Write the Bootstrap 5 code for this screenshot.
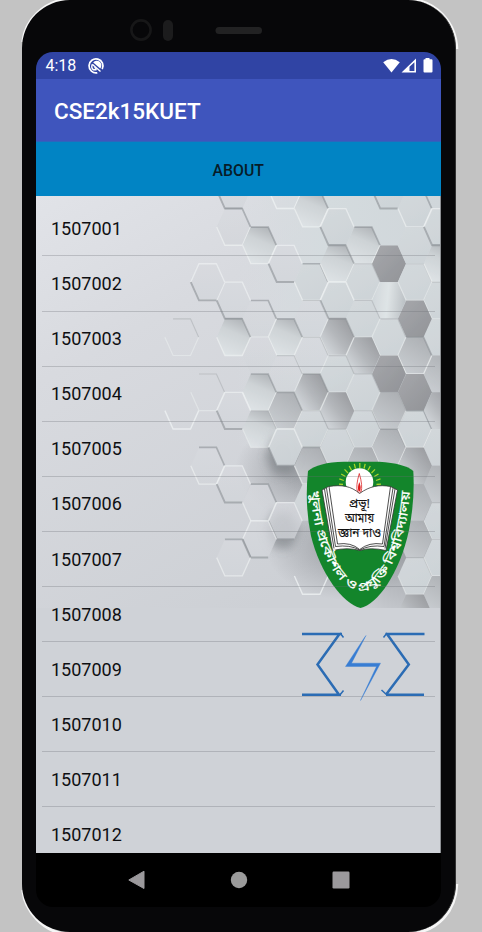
<!DOCTYPE html>
<html lang="en">
<head>
<meta charset="utf-8">
<meta name="viewport" content="width=device-width, initial-scale=1">
<title>CSE2k15KUET</title>
<link href="https://cdn.jsdelivr.net/npm/bootstrap@5.3.0/dist/css/bootstrap.min.css" rel="stylesheet">
<style>
body{background:#c3c3c3;font-family:Roboto,"Noto Sans",sans-serif;width:482px;height:932px}
.stage{width:482px;height:932px}
.rim{left:0;top:0}
.phone{width:434px;height:932px;margin-left:22px;background:#070709;border-radius:48px;border-right:1px solid #333;padding:0 14px}
.bezel{height:52px;margin:0 -14px}
.screen{width:404.5px;height:855px;border-radius:17px;background:#000}
.statusbar{height:27px;background:#3044a4;color:#fff;font-size:16px;padding-left:9.5px;padding-right:8px}
.appbar{height:63px;background:#3f55bd;padding:2px 0 0 18px;color:#fff;font-size:22.5px;font-weight:500;box-shadow:inset 0 -1px 0 #2c66bd}
.about{height:54px;background:#0184c4;color:#071c29;font-size:15.8px;font-weight:500;border:0;border-radius:0;padding:3px 0 0}
.about:hover{background:#0184c4}
.pane{height:657px;background:#cfd2d7;border-right:1px solid #8d9094}
.backdrop{left:0;top:0}
.roster{padding:5.4px 5px 0 6px}
.roster .list-group-item{height:55.1px;background:transparent;border:0;border-bottom:1.5px solid rgba(105,110,116,.3);border-radius:0;padding:0 9px;font-size:18px;color:#0e0f12;display:flex;align-items:center}
.navkeys{height:54px;padding:0 91px 0 92px}
</style>
</head>
<body>
<div class="stage position-relative overflow-hidden">
  <svg class="rim position-absolute" width="482" height="932" fill="none" stroke="#f6f6f6" stroke-width="2.600">
    <path d="M22.5 42C25 20 44 1 68 -1M410 -1C436 1 456 22 457 49M22.5 890C25 912 44 932 66 934M412 934C438 930 456 912 457 884"/>
  </svg>
  <main class="phone position-relative">
    <div class="bezel">
      <svg width="434" height="52">
        <circle cx="119" cy="30" r="9.6" fill="none" stroke="#171718" stroke-width="2.6"/>
        <rect x="141" y="20" width="10" height="21" rx="5" fill="#1c1c1d"/>
        <rect x="193.500" y="27" width="46.500" height="7" rx="3.500" fill="#222223"/>
      </svg>
    </div>
    <div class="screen overflow-hidden d-flex flex-column">
      <div class="statusbar d-flex align-items-center">
        <span>4:18</span>
        <svg class="ms-2" width="24" height="20" viewBox="0 0 24 20">
          <path d="M13.300 16.800A7 7 0 1 1 18.200 13.200" fill="none" stroke="#fff" stroke-width="1.700"/>
          <path d="M9.200 6.400A4.600 4.600 0 0 1 16.300 12.400z" fill="#fff"/>
          <path d="M8.300 8.300L16.500 15.500M8.300 8.300Q6.800 12 9.500 13.800H12.500" fill="none" stroke="#fff" stroke-width="1.400"/>
          <path d="M10.500 11.300l2.200 1.900" stroke="#fff" stroke-width="1.500"/>
        </svg>
        <svg class="ms-auto" width="50" height="18" viewBox="0 0 50 18" fill="#fff">
          <path d="M.2 5.200Q8.500-1.400 16.800 5.200L8.500 15.500z"/>
          <path fill-rule="evenodd" d="M18.500 15.500L33 1.500V15.500zM26.500 9.800V14H31.400V5.200z"/>
          <path d="M42.500 1h4v1.300h2q1 0 1 1V14.500q0 1-1 1h-7q-1 0-1-1V3.300q0-1 1-1h1z"/>
        </svg>
      </div>
      <header class="appbar d-flex align-items-center">CSE2k15KUET</header>
      <button class="about btn w-100" type="button">ABOUT</button>
      <section class="pane position-relative overflow-hidden">
        <svg class="backdrop position-absolute" width="405" height="657" viewBox="36 196 405 657">
          <defs>
            <linearGradient id="wall" x1="0" y1="0" x2=".55" y2="1"><stop offset="0" stop-color="#e1e3e8"/><stop offset=".35" stop-color="#d8dadf"/><stop offset="1" stop-color="#cdd0d5"/></linearGradient>
            <linearGradient id="tintx"><stop offset="0" stop-color="#d7dce0" stop-opacity="0"/><stop offset=".45" stop-color="#d4dbde"/><stop offset="1" stop-color="#d0d6da"/></linearGradient>
            <radialGradient id="gloom"><stop offset="0" stop-color="#85888d" stop-opacity=".7"/><stop offset="1" stop-color="#85888d" stop-opacity="0"/></radialGradient>
            <linearGradient id="fillL" x1=".2" y1="0" x2=".7" y2="1"><stop offset="0" stop-color="#d3d8db"/><stop offset="1" stop-color="#cdd3d7"/></linearGradient>
            <linearGradient id="fillF" x1="0" y1="0" x2="0" y2="1"><stop offset="0" stop-color="#d7d9de"/><stop offset="1" stop-color="#d2d5da"/></linearGradient>
            <linearGradient id="fillS" x1=".75" y1="0" x2=".35" y2="1"><stop offset="0" stop-color="#afb3b7"/><stop offset=".4" stop-color="#cdd2d5"/><stop offset="1" stop-color="#dde2e5"/></linearGradient>
            <linearGradient id="fillG" x1=".8" y1=".1" x2=".1" y2=".7"><stop offset="0" stop-color="#9c9ea2"/><stop offset=".55" stop-color="#b3b6ba"/><stop offset="1" stop-color="#cdd1d5"/></linearGradient>
            <linearGradient id="fillM" x1=".8" y1="0" x2=".2" y2="1"><stop offset="0" stop-color="#abaeb2"/><stop offset="1" stop-color="#c9cdd1"/></linearGradient>
            <linearGradient id="fillK" x1="0" y1="0" x2="1" y2="1"><stop offset="0" stop-color="#a5a6aa"/><stop offset="1" stop-color="#8f9195"/></linearGradient>
            <linearGradient id="fillB" x1="0" y1="0" x2="1" y2=".1"><stop offset="0" stop-color="#ced4d8"/><stop offset=".5" stop-color="#dfe4e6"/><stop offset="1" stop-color="#bcc1c5"/></linearGradient>
            <filter id="soft" x="-20%" y="-20%" width="140%" height="140%"><feGaussianBlur stdDeviation=".75"/></filter>
            <filter id="softer" x="-60%" y="-60%" width="220%" height="220%"><feGaussianBlur stdDeviation="5"/></filter>
            <clipPath id="photo"><rect x="36" y="196" width="405" height="412"/></clipPath>
            <path id="motto" d="M310.500 491C313 541 335 591 361 591C387 591 407 541 410 490"/>
          </defs>
          <g clip-path="url(#photo)">
            <rect x="36" y="196" width="405" height="413" fill="url(#wall)"/>
            <rect x="235" y="196" width="206" height="250" fill="url(#tintx)"/>
            <ellipse cx="305" cy="470" rx="70" ry="50" fill="url(#gloom)"/>
            <ellipse cx="375" cy="440" rx="110" ry="85" fill="url(#gloom)"/>
            <ellipse cx="345" cy="545" rx="80" ry="55" fill="url(#gloom)"/>
            <ellipse cx="415" cy="545" rx="80" ry="85" fill="url(#gloom)"/>
            <g id="cells" filter="url(#soft)"></g>
          </g>
          <!-- university crest -->
          <path d="M308 471Q318 462.500 344 461.800H379Q405 463.500 413.300 471Q415 500 409 530C400 573 377 605 360.500 608C343 604 320 573 311 536Q304.500 505 308 471z" fill="#13852b"/>
          <g stroke="#a9d52a" stroke-width="1.300"><path d="M343 484.500l-4-.4M343.800 480.500l-4.500-1.600M345.400 476.500l-4.200-2.500M348 473l-3.500-3.600M351.500 470.300l-2.300-4.300M355.500 468.600l-1.200-4.800M359.800 468v-5M364 468.600l1.200-4.800M368 470.300l2.300-4.300M371.500 473l3.500-3.600M374.300 476.500l4.200-2.500M376 480.500l4.500-1.600M376.500 484.500l4.500-.4"/></g>
          <circle cx="359.500" cy="482" r="13.800" fill="#fff"/>
          <path d="M359.300 473.500Q355.500 486 357.500 492H361Q363 486 359.300 473.500z" fill="#fff" stroke="#d22" stroke-width=".8"/><path d="M359.300 482q-2.200 6-.8 9h1.700q1.300-4-.9-9z" fill="#e01919"/>
          <path d="M322 490L328.500 486.500C342 484.500 351 486 359.500 493.500C370 486 379 484.500 390.500 486.500L397.500 490L386 550.500Q370 547 360 550.500Q348 547 332.500 550.500z" fill="#fff" stroke="#333" stroke-width=".8"/>
          <path d="M329 486.500L337.500 544Q351 542 359.700 549.500Q369 542 382.500 544L390.500 486.500M326.500 488L335.500 546.500Q350 544.500 359.700 550M324.500 489L334 548.500M393 488L384 546.500Q370 544.500 360 550M395 489L385 548.500" fill="none" stroke="#222" stroke-width=".8"/>
          <g font-family="'Noto Sans Bengali','Noto Sans',FreeSans,sans-serif" text-anchor="middle" fill="#111" stroke="#111" stroke-width=".15" font-size="12">
            <text x="359.500" y="507.500" textLength="21" lengthAdjust="spacingAndGlyphs">প্রভূ!</text>
            <text x="359.500" y="522" textLength="29" lengthAdjust="spacingAndGlyphs">আমায়</text>
            <text x="359.500" y="536.500" textLength="43" lengthAdjust="spacingAndGlyphs">জ্ঞান দাও</text>
          </g>
          <text font-family="'Noto Sans Bengali','Noto Sans',FreeSans,sans-serif" font-size="12.500" fill="#fff" stroke="#fff" stroke-width=".2"><textPath href="#motto" textLength="238" lengthAdjust="spacingAndGlyphs">খুলনা প্রকৌশল ও প্রযুক্তি বিশ্ববিদ্যালয়</textPath></text>
          <!-- department monogram -->
          <g fill="none" stroke="#2b6cb4" stroke-width="2.500">
            <path d="M302 634H342M339.500 634L317.500 664.500L338.500 694M302 694.700H341"/>
            <path d="M424.500 634H385.500M387 634L408.800 664.500L386.500 694M424 694.700H386"/>
            <path d="M340 633l3.500 4.500M339.500 695.500l4-5M387 633l-3.500 4.500M387.500 695.500l-6-5.500" stroke-width="1.500"/>
          </g>
          <path d="M366 635.500L351.500 663.200H380.500L360.500 700.500L376.500 666.500H345.500L364.500 637.500z" fill="#387dd3" stroke="#387dd3" stroke-width=".4"/>
        </svg>
        <ul class="roster list-group position-relative" id="roster"></ul>
      </section>
      <nav class="navkeys d-flex align-items-center justify-content-between">
        <svg width="18" height="20" viewBox="0 0 18 20"><path d="M16 1.200V18.500L.8 10z" fill="#9b999c" stroke="#9b999c" stroke-linejoin="round"/></svg>
        <svg width="18" height="18"><circle cx="9" cy="9" r="8.200" fill="#9b9b9b"/></svg>
        <svg width="18" height="18"><rect x=".500" y=".500" width="17" height="17" rx="1.200" fill="#9b999c"/></svg>
      </nav>
    </div>
  </main>
</div>
<script src="https://cdn.jsdelivr.net/npm/bootstrap@5.3.0/dist/js/bootstrap.bundle.min.js"></script>
<script>
const roster = document.getElementById('roster');
for (let i = 1; i <= 12; i++) {
  const li = document.createElement('li');
  li.className = 'list-group-item';
  li.textContent = 1507000 + i;
  roster.append(li);
}
// Honeycomb: column, half-row, surface (n none, L light, F faint, S sunk, G/M grey, K dark, B glossy), edge (s sunk, r raised, o outline, x soft shadow)
const cells = `2 -4 F r,4 -4 n u,2 -2 F s,3 -1 S s,4 0 F r,5 -3 S s,5 1 L s,6 -2 L r,7 -1 S s,6 0 S s,6 2 L r,7 1 L o,8 -4 L r,9 -3 L s,
8 0 K n,8 2 B n,9 1 L o,9 -1 L n,10 -2 L r,10 0 S s,10 2 L o,10 4 L n,10 6 M n,9 3 K n,9 5 M s,9 7 K n,8 4 L o,8 6 K n,8 8 M o,7 3 L o,7 5 G n,7 7 L o,
6 4 G s,6 6 L o,6 8 G n,5 3 F o,5 5 F o,5 7 G s,4 4 S s,4 6 F o,3 3 F s,3 5 F n,3 7 S s,4 8 M s,2 2 F r,2 4 S s,1 1 F r,0 4 n o,1 7 n o,0 8 n u,2 8 F r,
3 9 S o,4 10 L x,5 9 L o,5 11 M s,5 13 L n,6 10 L o,7 9 L o,8 10 M s,9 9 L s,9 11 G n,10 8 G n,10 10 L n,10 12 M n,10 14 L o,9 13 M n,9 15 M n,9 17 L o,10 16 L o,
9 19 G n,10 18 M n,1 11 F s,2 12 F r,3 13 F s,4 14 F x,3 15 F r,2 16 F s,4 16 n n,5 17 n u,7 11 M n,6 12 M n`.split(',');
const layer = document.getElementById('cells');
const pts = (x, y) => [[x-8.7,y-18.3],[x+8.7,y-18.3],[x+16.9,y],[x+8.7,y+18.3],[x-8.7,y+18.3],[x-16.9,y]];
const path = (p, ids) => 'M' + ids.map(i => p[i].join(' ')).join('L');
let out = '';
for (const row of cells) {
  const [c, h, f, e] = row.trim().split(' ');
  const p = pts(181.8 + 25.9 * c, 263.7 + 18.37 * h);
  if (e === 'x') out += `<polygon points="${p.map(q => [q[0]-3,q[1]+9]).join(' ')}" fill="#777b80" opacity=".6" filter="url(#softer)"/>`;
  if (f !== 'n') out += `<polygon points="${p.join(' ')}" fill="url(#fill${f})" opacity="${f === 'F' ? .75 : .97}"/>`;
  const edge = (ids, col, w, o) => out += `<path d="${path(p, ids)}" fill="none" stroke="${col}" stroke-width="${w}" opacity="${o}"/>`;
  if (e === 's') { edge([0,1,2], '#8e9297', 1.7, .6); edge([2,3,4,5], '#eff2f3', 1.3, .65); }
  if (e === 'r' || e === 'x') { edge([5,0,1,2], '#eef1f2', 1.3, .7); edge([5,4,3], '#92969b', 1.9, .65); }
  if (e === 'o') { edge([0,1,2], '#a6aaae', 1.1, .5); edge([2,3,4,5], '#eef1f2', 1.2, .5); }
  if (e === 'u') edge([5,4,3,2], '#eef1f2', 1.4, .8);
}
layer.innerHTML = out;
</script>
</body>
</html>
